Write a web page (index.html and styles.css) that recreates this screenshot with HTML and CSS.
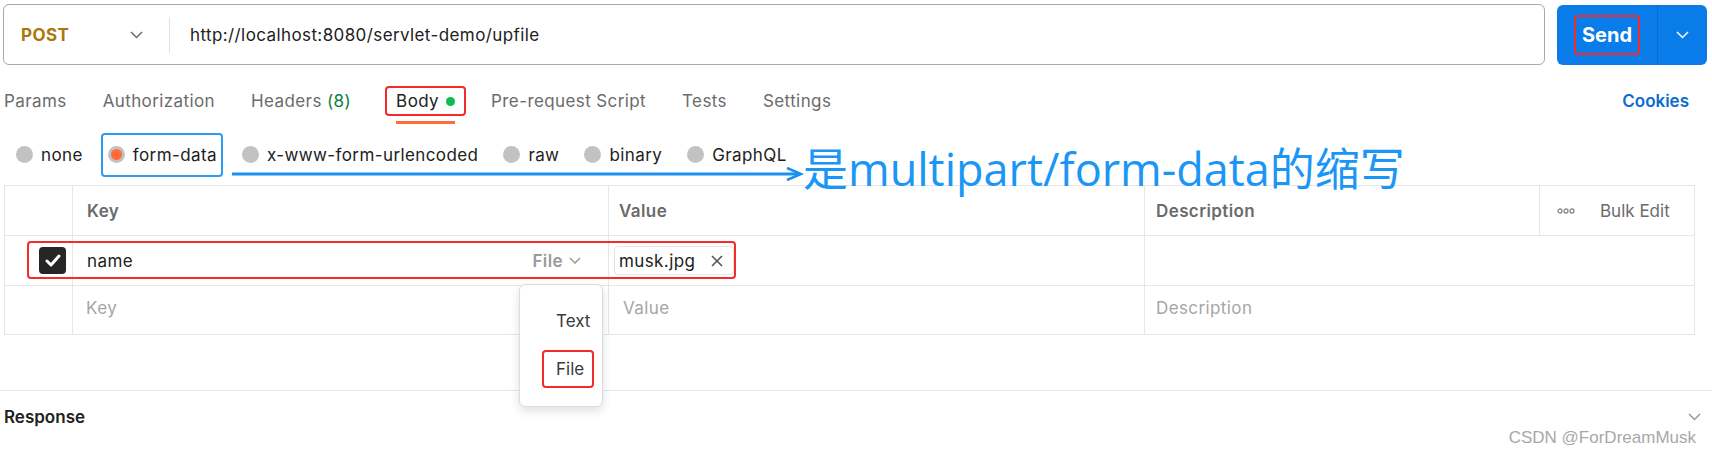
FILE: index.html
```html
<!DOCTYPE html>
<html lang="zh-CN">
<head>
  <meta charset="UTF-8" />
  <title>Postman - upfile</title>
  <link rel="stylesheet" href="styles.css">
</head>
<body>
  <div class="page">
    <div class="request-bar">
      <div class="url-box">
        <div class="method">
          <span class="method-name">POST</span>
          <svg class="chev" width="13" height="8" viewBox="0 0 13 8"><polyline points="1,1 6.5,6.5 12,1" /></svg>
        </div>
        <div class="url">http://localhost:8080/servlet-demo/upfile</div>
      </div>
      <div class="send-group">
        <div class="send"><span class="mark">Send</span></div>
        <div class="send-more">
          <svg class="chev white" width="13" height="8" viewBox="0 0 13 8"><polyline points="1,1 6.5,6.5 12,1" /></svg>
        </div>
      </div>
    </div>

    <div class="tabs">
      <div class="tab-list">
        <span class="tab">Params</span>
        <span class="tab">Authorization</span>
        <span class="tab">Headers <span class="count">(8)</span></span>
        <span class="tab active"><span class="mark">Body <i class="dot"></i></span></span>
        <span class="tab">Pre-request Script</span>
        <span class="tab">Tests</span>
        <span class="tab">Settings</span>
      </div>
      <span class="cookies">Cookies</span>
    </div>

    <div class="body-types">
      <label class="radio"><i class="circle"></i>none</label>
      <label class="radio picked"><span class="mark-blue"><i class="circle on"></i>form-data</span></label>
      <label class="radio"><i class="circle"></i>x-www-form-urlencoded</label>
      <label class="radio"><i class="circle"></i>raw</label>
      <label class="radio"><i class="circle"></i>binary</label>
      <label class="radio"><i class="circle"></i>GraphQL</label>
    </div>

    <div class="kv-table">
      <div class="cell head"></div>
      <div class="cell head">Key</div>
      <div class="cell head">Value</div>
      <div class="cell head">Description</div>
      <div class="cell head bulk">
        <svg width="18" height="6" viewBox="0 0 18 6"><circle cx="3" cy="3" r="2" /><circle cx="9" cy="3" r="2" /><circle cx="15" cy="3" r="2" /></svg>
        <span>Bulk Edit</span>
      </div>

      <div class="cell check">
        <span class="checkbox">
          <svg width="16" height="13" viewBox="0 0 16 13"><polyline points="2,7 6,11 14,2" /></svg>
        </span>
      </div>
      <div class="cell key">
        <span>name</span>
        <span class="type">File
          <svg class="chev light" width="12" height="7" viewBox="0 0 12 7"><polyline points="1,1 6,6 11,1" /></svg>
        </span>
      </div>
      <div class="cell value">
        <span class="chip">musk.jpg
          <svg width="12" height="12" viewBox="0 0 12 12"><line x1="1" y1="1" x2="11" y2="11" /><line x1="11" y1="1" x2="1" y2="11" /></svg>
        </span>
      </div>
      <div class="cell desc"></div>

      <div class="cell check last"></div>
      <div class="cell placeholder last">Key</div>
      <div class="cell placeholder last">Value</div>
      <div class="cell placeholder desc last">Description</div>

      <div class="row-mark"></div>
      <div class="type-menu">
        <div class="menu-item">Text</div>
        <div class="menu-item"><span class="mark">File</span></div>
      </div>
    </div>

    <div class="response">
      <span>Response</span>
      <svg class="chev" width="13" height="8" viewBox="0 0 13 8"><polyline points="1,1 6.5,6.5 12,1" /></svg>
    </div>

    <!-- 标注 -->
    <svg class="arrow" width="574" height="16" viewBox="0 0 574 16">
      <line x1="0" y1="8" x2="566" y2="8" />
      <polyline points="555,2 569,8 555,14" />
    </svg>
    <div class="note">是multipart/form-data的缩写</div>
    <div class="watermark">CSDN @ForDreamMusk</div>
  </div>
</body>
</html>
```

FILE: styles.css
```css
* { box-sizing: border-box; }
html, body {
  margin: 0;
  padding: 0;
  background: #fff;
  font-family: Inter, "Noto Sans", sans-serif;
  font-size: 17px;
  letter-spacing: 0.4px;
  color: #212121;
}

.page {
  position: relative;
  width: 1712px;
  height: 455px;
  overflow: hidden;
}

.chev {
  fill: none;
  stroke: #6b6b6b;
  stroke-width: 1.5;
}
.chev.white { stroke: #fff; }
.chev.light { stroke: #9a9a9a; }

/* 红色标注框 */
.mark {
  display: inline-flex;
  align-items: center;
  padding: 2px 8px;
  margin: -4px -10px;
  border: 2px solid #f52a2a;
  border-radius: 4px;
}

/* 地址栏 */
.request-bar {
  display: flex;
  padding: 4px 5px 0 3px;
  gap: 12px;
}
.url-box {
  flex: 1;
  height: 61px;
  display: flex;
  align-items: center;
  border: 1px solid #a8a8a8;
  border-radius: 6px;
}
.method {
  width: 166px;
  height: 36px;
  padding-left: 17px;
  padding-right: 26px;
  display: flex;
  align-items: center;
  justify-content: space-between;
  border-right: 1px solid #e2e2e2;
}
.method-name {
  font-weight: 700;
  color: #a8780c;
}
.url {
  padding-left: 20px;
}
.send-group {
  width: 150px;
  height: 60px;
  margin-top: 1px;
  display: flex;
  background: #0a7ce9;
  border-radius: 6px;
  color: #fff;
}
.send {
  width: 101px;
  display: flex;
  align-items: center;
  justify-content: center;
  font-size: 20px;
  font-weight: 700;
  letter-spacing: 0;
  border-right: 1px solid #086ad0;
}
.send .mark { padding: 6px 6px; margin: -8px -8px; line-height: 24px; }
.send-more {
  flex: 1;
  display: flex;
  align-items: center;
  justify-content: center;
}

/* 标签页 */
.tabs {
  display: flex;
  justify-content: space-between;
  align-items: flex-start;
  padding: 24px 23px 0 4px;
  height: 59px;
}
.tab-list {
  display: flex;
  gap: 36px;
}
.tab {
  line-height: 24px;
  padding-bottom: 8px;
  border-bottom: 3px solid transparent;
  color: #6b6b6b;
  white-space: nowrap;
}
.tab .count { color: #0b7f3e; }
.tab.active {
  margin-left: 9px;
  color: #212121;
  border-bottom-color: #ff6c37;
}
.tab.active .mark { padding: 1px 9px 1px 9px; margin: -3px -11px -3px -11px; }
.dot {
  display: inline-block;
  width: 9px;
  height: 9px;
  margin-left: 7px;
  border-radius: 50%;
  background: #0cbb52;
}
.cookies {
  line-height: 24px;
  color: #0b6ccd;
  font-weight: 600;
  letter-spacing: 0;
}

/* body 类型 */
.body-types {
  height: 61px;
  display: flex;
  align-items: center;
  padding-left: 16px;
  gap: 25px;
}
.radio {
  display: flex;
  align-items: center;
  gap: 8px;
  line-height: 24px;
}
.circle {
  width: 17px;
  height: 17px;
  border-radius: 50%;
  background: #c2c2c2;
  display: flex;
  align-items: center;
  justify-content: center;
}
.circle.on::after {
  content: "";
  width: 11px;
  height: 11px;
  border-radius: 50%;
  background: #ff6c37;
}
.mark-blue {
  display: inline-flex;
  align-items: center;
  gap: 8px;
  padding: 8px 4px 8px 5px;
  margin: -10px -6px -10px -7px;
  border: 2px solid #2d9cf0;
  border-radius: 4px;
}

/* 参数表格 */
.kv-table {
  position: relative;
  margin: 0 17px 0 4px;
  display: grid;
  grid-template-columns: 68px 536px 536px 395px 1fr;
  grid-template-rows: 50px 50px 49px;
  border: 1px solid #e6e6e6;
  border-right: none;
  border-bottom: none;
}
.cell {
  display: flex;
  align-items: center;
  padding: 0 14px;
  border-right: 1px solid #e6e6e6;
  border-bottom: 1px solid #e6e6e6;
}
.cell.last { padding-bottom: 4px; }
.cell.head {
  font-weight: 600;
  color: #6b6b6b;
}
.cell.head:nth-child(3) { padding-left: 10px; }
.cell.head:nth-child(4) { padding-left: 11px; }
.cell.desc { grid-column: span 2; padding-left: 11px; }
.cell.bulk {
  font-weight: 400;
  letter-spacing: 0;
  gap: 25px;
  padding-left: 17px;
}
.bulk svg circle { fill: none; stroke: #8a8a8a; stroke-width: 1.3; }
.cell.check {
  justify-content: flex-end;
  padding: 0 6px 0 0;
}
.checkbox {
  width: 27px;
  height: 27px;
  border-radius: 4px;
  background: #262626;
  display: flex;
  align-items: center;
  justify-content: center;
}
.checkbox svg polyline {
  fill: none;
  stroke: #fff;
  stroke-width: 3;
  stroke-linecap: round;
  stroke-linejoin: round;
}
.cell.key {
  justify-content: space-between;
  padding-right: 27px;
}
.type {
  display: flex;
  align-items: center;
  gap: 6px;
  font-weight: 600;
  color: #9a9a9a;
}
.cell.value { padding-left: 5px; }
.cell.value.placeholder, .placeholder:nth-last-child(5) { padding-left: 13px; }
.chip {
  height: 29px;
  display: flex;
  align-items: center;
  gap: 16px;
  padding: 0 10px 0 4px;
  border: 1px solid #e4e4e4;
  border-radius: 4px;
}
.chip svg line { stroke: #555; stroke-width: 1.6; }
.placeholder { color: #a6a6a6; }

.row-mark {
  position: absolute;
  left: 22px;
  top: 55px;
  width: 709px;
  height: 38px;
  border: 2px solid #f52a2a;
  border-radius: 4px;
  pointer-events: none;
}
.type-menu {
  position: absolute;
  left: 514px;
  top: 98px;
  width: 84px;
  height: 123px;
  padding: 24px 0 0 36px;
  background: #fff;
  border: 1px solid #dcdcdc;
  border-radius: 6px;
  box-shadow: 0 4px 10px rgba(0, 0, 0, 0.12);
  display: flex;
  flex-direction: column;
  gap: 24px;
  color: #3a3a3a;
  letter-spacing: 0;
}
.menu-item { line-height: 24px; }
.menu-item .mark { padding: 5px 8px 5px 12px; margin: -7px -10px -7px -14px; }

/* 响应区 */
.response {
  margin-top: 55px;
  height: 52px;
  display: flex;
  align-items: center;
  justify-content: space-between;
  padding: 0 11px 0 4px;
  border-top: 1px solid #e6e6e6;
  font-weight: 600;
  letter-spacing: 0;
}
.response .chev { stroke: #9a9a9a; }

/* 标注 */
.arrow {
  position: absolute;
  left: 232px;
  top: 166px;
}
.arrow line { stroke: #1d8ff0; stroke-width: 3; }
.arrow polyline { fill: none; stroke: #1d8ff0; stroke-width: 2.5; }
.note {
  position: absolute;
  left: 803px;
  top: 143px;
  font-family: "Open Sans", "Noto Sans CJK SC", sans-serif;
  font-size: 45px;
  line-height: 52px;
  letter-spacing: 0;
  color: #1a96f6;
  white-space: nowrap;
}
.watermark {
  position: absolute;
  right: 16px;
  top: 428px;
  font-family: "Liberation Sans", Arial, sans-serif;
  font-size: 17px;
  letter-spacing: 0;
  color: #a8a8a8;
}
```
